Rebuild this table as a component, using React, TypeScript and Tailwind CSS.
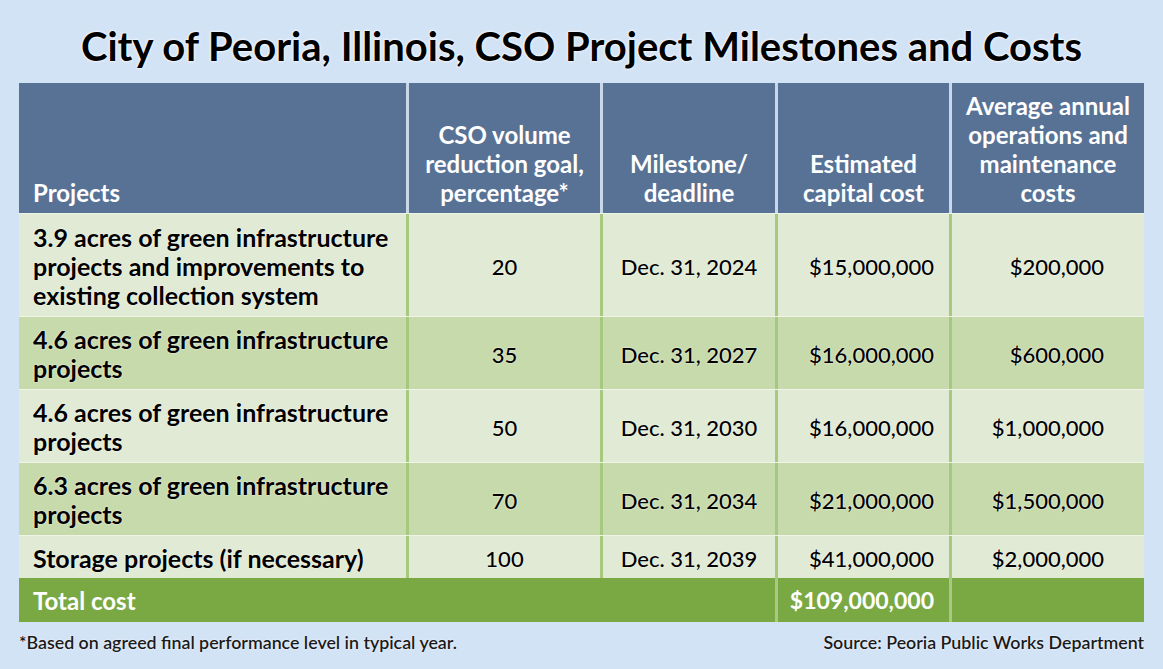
import React from "react";

const font = { fontFamily: "Lato, 'Noto Sans', sans-serif" };

const rows = [
  { p: ["3.9 acres of green infrastructure", "projects and improvements to", "existing collection system"], g: "20", d: "Dec. 31, 2024", c: "$15,000,000", o: "$200,000", h: "h-[103px]", bg: "bg-[#e0ead4]" },
  { p: ["4.6 acres of green infrastructure", "projects"], g: "35", d: "Dec. 31, 2027", c: "$16,000,000", o: "$600,000", h: "h-[73px]", bg: "bg-[#c7daab]" },
  { p: ["4.6 acres of green infrastructure", "projects"], g: "50", d: "Dec. 31, 2030", c: "$16,000,000", o: "$1,000,000", h: "h-[73px]", bg: "bg-[#e0ead4]" },
  { p: ["6.3 acres of green infrastructure", "projects"], g: "70", d: "Dec. 31, 2034", c: "$21,000,000", o: "$1,500,000", h: "h-[73px]", bg: "bg-[#c7daab]" },
  { p: ["Storage projects (if necessary)"], g: "100", d: "Dec. 31, 2039", c: "$41,000,000", o: "$2,000,000", h: "h-[43px]", bg: "bg-[#e0ead4]" },
];

const cols = "grid grid-cols-[387px_191px_172px_171px_192px] gap-x-[3px]";

export default function App() {
  return (
    <div className="w-[1163px] h-[669px] bg-[#d3e3f6] flex flex-col text-black" style={font}>
      <div className="pt-[22px] h-[66px] text-center text-[40px] leading-[48px] font-bold whitespace-nowrap [text-shadow:0_0_3px_#fff,0_0_2px_#fff]">
        City of Peoria, Illinois, CSO Project Milestones and Costs
      </div>
      <div className="mx-[19px] mt-[17px] flex flex-col text-[24px] leading-[29px] font-bold">
        <div className={`${cols} h-[130px] bg-[#c9d7e8] text-white whitespace-nowrap`}>
          <div className="bg-[#587296] flex items-end pl-[14px] pb-[6px]">Projects</div>
          <div className="bg-[#587296] flex flex-col justify-end items-center text-center pb-[6px]">
            <span>CSO volume</span>
            <span>reduction goal,</span>
            <span>percentage*</span>
          </div>
          <div className="bg-[#587296] flex flex-col justify-end items-center text-center pb-[6px]">
            <span>Milestone/</span>
            <span>deadline</span>
          </div>
          <div className="bg-[#587296] flex flex-col justify-end items-center text-center pb-[6px]">
            <span>Estimated</span>
            <span>capital cost</span>
          </div>
          <div className="bg-[#587296] flex flex-col justify-end items-center text-center pb-[6px]">
            <span>Average annual</span>
            <span>operations and</span>
            <span>maintenance</span>
            <span>costs</span>
          </div>
        </div>
        {rows.map((r, i) => (
          <div key={i} className={`${cols} ${r.h} bg-[#a6c87f] border-t border-[#eef4e6] whitespace-nowrap [text-shadow:0_0_2px_#fff]`}>
            <div className={`${r.bg} flex flex-col justify-center pl-[14px] pt-[2px] text-[25px]`}>
              {r.p.map((l, j) => (
                <span key={j}>{l}</span>
              ))}
            </div>
            <div className={`${r.bg} flex items-center justify-center text-[22px] font-medium pt-[2px]`}>{r.g}</div>
            <div className={`${r.bg} flex items-center justify-center text-[22px] font-medium pt-[2px]`}>{r.d}</div>
            <div className={`${r.bg} flex items-center justify-end pr-[15px] text-[22px] font-medium pt-[2px]`}>{r.c}</div>
            <div className={`${r.bg} flex items-center justify-end pr-[40px] text-[22px] font-medium pt-[2px]`}>{r.o}</div>
          </div>
        ))}
        <div className="grid grid-cols-[756px_171px_192px] gap-x-[3px] h-[44px] bg-[#a8c886] text-white">
          <div className="bg-[#7aa944] flex items-center pl-[14px]">Total cost</div>
          <div className="bg-[#7aa944] flex items-center justify-end pr-[15px] text-[23px]">$109,000,000</div>
          <div className="bg-[#7aa944]"></div>
        </div>
      </div>
      <div className="mx-[19px] h-[40px] flex items-center justify-between text-[17.8px] font-semibold text-[#1a1a1a] [text-shadow:0_0_2px_#fff]">
        <span>*Based on agreed final performance level in typical year.</span>
        <span>Source: Peoria Public Works Department</span>
      </div>
    </div>
  );
}
